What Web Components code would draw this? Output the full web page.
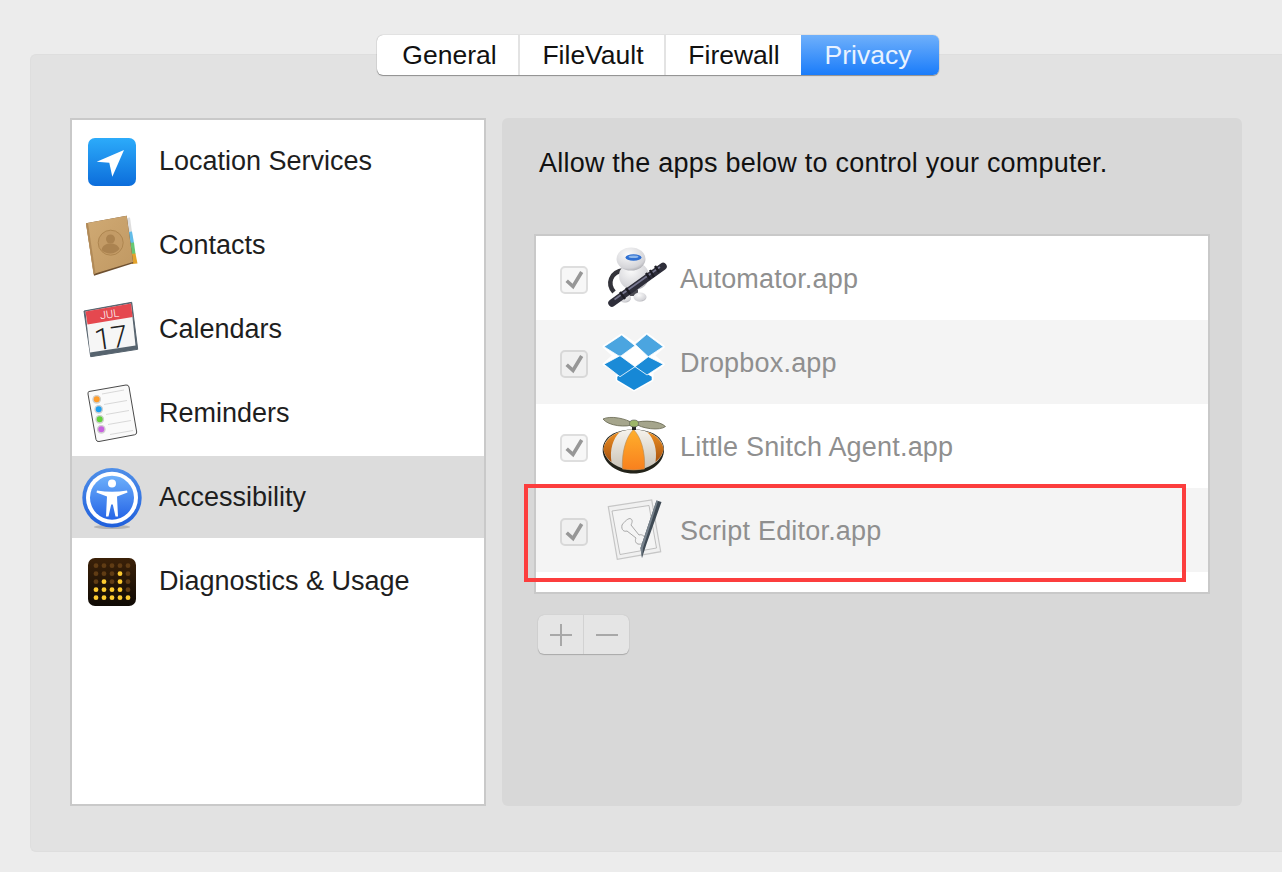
<!DOCTYPE html>
<html><head><meta charset="utf-8"><title>Privacy</title>
<style>
html,body{margin:0;height:872px;overflow:hidden;background:#ececec;font-family:"Liberation Sans",Arial,sans-serif}
</style></head><body>
<prefs-window>
  <seg-tabs slot="tabs"></seg-tabs>
  <service-list slot="left">
    <service-row label="Location Services" icon="location"></service-row>
    <service-row label="Contacts" icon="contacts"></service-row>
    <service-row label="Calendars" icon="calendar"></service-row>
    <service-row label="Reminders" icon="reminders"></service-row>
    <service-row label="Accessibility" icon="access" selected></service-row>
    <service-row label="Diagnostics &amp; Usage" icon="diag"></service-row>
  </service-list>
  <detail-pane slot="right">
    <app-row label="Automator.app" icon="automator"></app-row>
    <app-row label="Dropbox.app" icon="dropbox" alt></app-row>
    <app-row label="Little Snitch Agent.app" icon="snitch"></app-row>
    <app-row label="Script Editor.app" icon="script" alt></app-row>
  </detail-pane>
</prefs-window>
<script>
const ICONS={
location:`<defs><linearGradient id="g" x1="0" y1="0" x2="0" y2="1"><stop offset="0" stop-color="#2cabfa"/><stop offset="1" stop-color="#0c6ddb"/></linearGradient></defs>
<rect x="8" y="8" width="48" height="48" rx="7" fill="url(#g)"/><path d="M44 20 16.7 31.7 29.3 32.7 32.3 46.7Z" fill="#fff"/>`,
contacts:`<defs><linearGradient id="g" x1="0" y1="0" x2="1" y2="1"><stop offset="0" stop-color="#d0aa74"/><stop offset="1" stop-color="#c09862"/></linearGradient></defs>
<path d="M46 4 50 3.600 52 18 47 19Z" fill="#dedede"/><path d="M48 18 52 17.600 54 29 49 29Z" fill="#62bce8"/><path d="M49 29 54 28.600 55.500 40 50.500 40Z" fill="#66c774"/><path d="M50 40 55.500 39.600 57.500 49.500 52 50Z" fill="#e3a32c"/>
<path d="M6 9.300 46.700 1.700 53.300 49.300 14 61.700Z" fill="#6e5030"/><path d="M6 9.300 46.700 1.700 53 48 13.500 60Z" fill="url(#g)"/><path d="M6 9.300 8 9 15.500 59.500 13.800 60.500Z" fill="#b18a58"/>
<circle cx="30.700" cy="28.700" r="12.500" fill="#c39b66" stroke="#ae8650" stroke-width="1"/><circle cx="30.500" cy="25" r="4.500" fill="#ab8350"/><path d="M21.500 36c1-5 5-6.500 9-6.500s7.500 1.500 9 5.500c-2 2.600-5.500 4.500-9.300 4.500-3.400 0-6.600-1.400-8.700-3.500Z" fill="#ab8350"/>`,
calendar:`<path d="M4 13 51.700 4.300 57.700 51.300 10.700 58.700Z" fill="#56636e" stroke="#56636e" stroke-width="1" stroke-linejoin="round"/><path d="M5.500 13.500 51 5.500 55.500 47.500 10 54.500Z" fill="#f6f6f6"/><path d="M5.500 13.500 51 5.500 52.600 19 7.500 26.500Z" fill="#e5484f"/>
<text x="29.500" y="20" font-size="11" fill="#fff" text-anchor="middle" transform="rotate(-8 29 16)" font-family="Roboto" font-weight="300">JUL</text>
<text x="31" y="50.500" font-size="30" fill="#222" text-anchor="middle" transform="rotate(-8 30 40)" font-family="Roboto" font-weight="300">17</text>`,
reminders:`<path d="M9 9.500 46 3 Q48.500 2.700 49 5 L56.700 50 Q57 52.300 54.500 52.800 L19 59.500 Q16.500 59.800 16 57.500 L8 12 Q7.700 9.800 9 9.500Z" fill="#fafafa" stroke="#4a4a4a" stroke-width="1"/>
<path d="M22 12 44 8M24 22.500 47 18.500M26 32.500 49 28.500M28 42.500 51 38.500M30 52.500 53 48.500" stroke="#cfcfcf" stroke-width=".8"/>
<g stroke="#d0d0d0" stroke-width="1.400"><circle cx="16.700" cy="17.300" r="3.700" fill="#ff9c2a"/><circle cx="18.700" cy="27.300" r="3.700" fill="#1ea0f2"/><circle cx="19.700" cy="37.300" r="3.700" fill="#63d23a"/><circle cx="21.300" cy="47.300" r="3.700" fill="#c861e0"/></g>`,
access:`<defs><linearGradient id="g" x1="0" y1="0" x2="0" y2="1"><stop offset="0" stop-color="#6db0fb"/><stop offset="1" stop-color="#2564e6"/></linearGradient><linearGradient id="h" x1="0" y1="0" x2="0" y2="1"><stop offset="0" stop-color="#4f8fe8"/><stop offset="1" stop-color="#1f5fdc"/></linearGradient></defs>
<ellipse cx="32" cy="61" rx="18" ry="2" fill="#999" opacity=".6"/><circle cx="32" cy="31.700" r="29.700" fill="url(#h)"/><circle cx="32" cy="31.700" r="26" fill="#fff"/><circle cx="32" cy="31.700" r="22" fill="url(#g)"/>
<circle cx="32" cy="17.500" r="4" fill="#fff"/><path d="M17 24.500Q32 27 47 24.500L47.500 26.500 37 30.500 38 50.500 35.500 50.500 32.800 38.500H31.200L28.500 50.500 26 50.500 27 30.500 16.500 26.500Z" fill="#fff"/>`,
diag:`<defs><linearGradient id="g" x1="0" y1="0" x2="0" y2="1"><stop offset="0" stop-color="#3b2108"/><stop offset="1" stop-color="#0f0a05"/></linearGradient></defs><rect x="8" y="8" width="48" height="48" rx="7" fill="url(#g)"/>DOTS`,
automator:`<defs><radialGradient id="w" cx=".4" cy=".3" r=".85"><stop offset="0" stop-color="#fbfbfb"/><stop offset=".7" stop-color="#d4d4d8"/><stop offset="1" stop-color="#8e8e94"/></radialGradient></defs>
<path d="M24 24C10 26 7 38 14 46" fill="none" stroke="#33333a" stroke-width="4.500"/><rect x="26" y="38" width="12" height="12" fill="#4c4c54"/><ellipse cx="25" cy="52" rx="6" ry="4.500" fill="url(#w)"/><ellipse cx="40" cy="51" rx="6.500" ry="4.500" fill="url(#w)"/>
<ellipse cx="34" cy="30" rx="15" ry="14" fill="url(#w)"/><ellipse cx="31" cy="13" rx="14.500" ry="11.500" fill="url(#w)"/><ellipse cx="33.500" cy="11.500" rx="8" ry="3.200" fill="#2e6fd2"/><ellipse cx="33.500" cy="10.800" rx="5" ry="1.300" fill="#8fb8ea"/>
<path d="M12 57 63 20.500" stroke="#2e2e3a" stroke-width="7.500" stroke-linecap="round"/><path d="M14.500 53.500 60 21" stroke="#777790" stroke-width="1.600"/><path d="M20 46l5 7M26 42l4 6M50 24l4 7M46 27l4 6M55 20l4 6" stroke="#1c1c24" stroke-width="2.400"/>`,
dropbox:`<path d="M4 16.700 21.700 5 35 14 46.700 4.300 63.300 16.700 53 25.500 63.300 34.300 52 42V50L34 60 17.300 50V42L4 34.300 14 25.500Z" fill="#fff" stroke="#fff" stroke-width="3" stroke-linejoin="round"/>
<path d="M35 36.700 51.700 46.700V50L34 60 17.300 50V46.700Z" fill="#1688d6"/>
<g stroke="#fff" stroke-width=".8" stroke-linejoin="round"><path d="M4 16.700 21.700 5 35 15.700 20 26.700Z" fill="#4ba5e0"/><path d="M35 14.300 46.700 4.300 63.300 16.700 48.300 26.700Z" fill="#4ba5e0"/><path d="M4 34.300 20 25.700 35 36.700 20 46.700Z" fill="#1b8bd7"/><path d="M35 36.700 48.300 26.700 63.300 34.300 47 45Z" fill="#1b8bd7"/></g>`,
snitch:`<defs><linearGradient id="g" x1="0" y1="0" x2="0" y2="1"><stop offset="0" stop-color="#ffb02c"/><stop offset="1" stop-color="#f8801e"/></linearGradient><linearGradient id="b" x1="0" y1="0" x2="0" y2="1"><stop offset="0" stop-color="#f6f3ec"/><stop offset="1" stop-color="#c9c2b6"/></linearGradient><linearGradient id="o" x1="0" y1="0" x2="0" y2="1"><stop offset="0" stop-color="#ec8f22"/><stop offset="1" stop-color="#a9530f"/></linearGradient></defs>
<path d="M2.700 36C2.700 22 17 15.500 33.500 15.500S64 22 64 36C64 49 50 59.500 33.500 59.500S2.700 49 2.700 36Z" fill="#23231a"/>
<path d="M3.500 35C4.500 22 20 15.500 33.500 15.500S62.500 22 63.500 35C62.500 47 48 56 33.500 56S4.500 47 3.500 35Z" fill="url(#b)"/>
<path d="M3.500 35C4.500 27 11 21 20 18 13 24 9.500 36 11.500 48 7 44 4 40 3.500 35ZM63.500 35C62.500 27 56 21 47 18 54 24 57.500 36 55.500 48 60 44 63 40 63.500 35Z" fill="url(#o)"/>
<path d="M33.500 15.500C26 23 21.500 38 22.500 55Q33.500 57 44.500 55C45.500 38 41 23 33.500 15.500Z" fill="url(#g)" stroke="#b6884f" stroke-width=".6"/>
<rect x="32" y="11" width="4" height="5" fill="#222"/><path d="M3 5C10 1.500 26 4 34 10 27 14 8 12 3 5ZM34 9C44 5.500 60 7 65.500 12.500 60 17 42 15 34 9Z" fill="#a5a58c" stroke="#66664f" stroke-width=".8"/><ellipse cx="34" cy="9.500" rx="4.500" ry="3.500" fill="#9db668" stroke="#555" stroke-width=".6"/>`,
script:`<path d="M8.300 8.700 51.700 2 60.700 53.700 17.300 61.300Z" fill="#f0f0f0" stroke="#c6c6c6" stroke-width="1.200"/><path d="M12 13 49 7.500 56.500 50 20 56.500Z" fill="#f4f4f4" stroke="#a9a9a9" stroke-width=".7"/>
<path d="M22 27c2-3 7-8 9-6 2 1 1 4 0 6l8 10c3-1 6 1 6 4s-4 6-7 5c-3-1-3-4-2-6L27 33c-3 1-6-1-5-6Z" fill="none" stroke="#a8a8a8" stroke-width="1"/>
<path d="M56.500 2.500 61.500 4 46.500 46 42 60 40.500 50Z" fill="#3f4a54"/><path d="M56.500 2.500 58 3 43 50 42 60 40.500 50Z" fill="#78838d"/>`
};
let dots='';const lit={1:[3],2:[1,3],3:[0,1,2,3],4:[0,1,2,3,4]};
for(let r=0;r<5;r++)for(let c=0;c<5;c++){const on=(lit[r]||[]).includes(c);dots+=`<circle cx="${16+c*8}" cy="${15.7+r*8}" r="2.400" fill="${on?'#fdcb30':'#603c14'}"/>`}
ICONS.diag=ICONS.diag.replace('DOTS',dots);

function tpl(html){const t=document.createElement('template');t.innerHTML=html;return t}
function el(name,html){customElements.define(name,class extends HTMLElement{connectedCallback(){if(this.shadowRoot)return;const s=this.attachShadow({mode:'open'});const fill=html.replace(/\{\{(\w+)\}\}/g,(m,k)=>k==='svg'?`<svg width="64" height="64" viewBox="0 0 64 64">${ICONS[this.getAttribute('icon')]}</svg>`:(this.getAttribute(k)||'').replace(/&/g,'&amp;'));s.appendChild(tpl(fill).content.cloneNode(true))}})}

el('prefs-window',`<style>
:host{display:flex;flex-direction:column;box-sizing:border-box;width:1252px;height:798px;margin:54px 0 0 30px;background:#e2e2e2;border:1px solid #dedede;border-right:0;border-radius:6px 0 0 6px;padding:0 40px 0 39px}
.tabs{display:flex;margin:-20px 0 0 307px;height:40px;position:relative;z-index:1}
.main{display:flex;gap:16px;margin-top:43px;height:688px}
</style><div class="tabs"><slot name="tabs"></slot></div><div class="main"><slot name="left"></slot><slot name="right"></slot></div>`);

el('seg-tabs',`<style>
:host{display:flex;box-sizing:border-box;width:562px;height:40px;border-radius:6px;background:#fff;box-shadow:0 1px 1px rgba(0,0,0,.35),0 0 1px rgba(0,0,0,.4);overflow:hidden;font-size:26.5px;color:#111}
div{display:flex;align-items:center;justify-content:center;border-right:2px solid #e3e3e3;box-sizing:border-box}
.p{border:0;color:#e8f2ff;background:linear-gradient(#6fb0fb,#1a7cfa)}
</style><div style="width:143px;padding-left:4px">General</div><div style="width:146px;padding-left:2px">FileVault</div><div style="width:135px;border:0;padding-left:1px">Firewall</div><div class="p" style="width:138px;padding-right:4px">Privacy</div>`);

el('service-list',`<style>
:host{display:flex;flex-direction:column;gap:2px;box-sizing:border-box;width:416px;height:688px;background:#fff;border:2px solid #c9c9c9}
</style><slot></slot>`);

el('service-row',`<style>
:host{display:flex;align-items:center;height:82px;padding-left:8px;gap:15px;font-size:27px;color:#1e1e1e}
:host([selected]){background:#dcdcdc}
svg{display:block;margin-top:2px;overflow:visible;flex:none}
</style>{{svg}}<span>{{label}}</span>`);

el('detail-pane',`<style>
:host{display:flex;flex-direction:column;box-sizing:border-box;width:740px;height:688px;background:#d8d8d8;border-radius:6px;padding:0 32px;position:relative}
h2{margin:31px 0 0 5px;font:400 27px/28px "Liberation Sans",Arial,sans-serif;color:#111;letter-spacing:.22px;height:85px}
.list{box-sizing:border-box;height:360px;background:#fff;border:2px solid #c9c9c9;flex:none}
.btns{display:flex;width:91px;height:39px;margin:21px 0 0 4px;background:#e5e5e5;border-radius:6px;box-shadow:0 1px 1px rgba(0,0,0,.2),0 0 1px rgba(0,0,0,.18)}
.btns div{flex:1;display:flex;align-items:center;justify-content:center}
.btns div:first-child{border-right:1px solid #d2d2d2}
.mark{position:absolute;left:22px;top:366px;width:662px;height:98px;box-sizing:border-box;border:4px solid #fc3d3d}
</style><h2>Allow the apps below to control your computer.</h2>
<div class="list"><slot></slot></div>
<div class="btns"><div><svg width="24" height="24" viewBox="0 0 24 24"><path d="M1 12H23M12 1V23" stroke="#a8a8a8" stroke-width="2"/></svg></div><div><svg width="24" height="24" viewBox="0 0 24 24"><path d="M1 12H23" stroke="#a8a8a8" stroke-width="2"/></svg></div></div>
<div class="mark"></div>`);

el('app-row',`<style>
:host{display:flex;align-items:center;height:84px;padding-left:24px;font-size:27px;color:#8f8f8f;letter-spacing:.2px}
:host([alt]){background:#f4f4f4}
.c{box-sizing:border-box;width:28px;height:28px;border:2px solid #dedede;border-radius:5px;background:#f7f7f7;margin:4px 12px 0 0;flex:none}
:host([alt]) .c{background:#f0f0f0;border-color:#d8d8d8}
.c svg{display:block}
.ic{display:block;flex:none;margin-right:16px;width:64px;height:64px}
.ic svg{display:block;overflow:visible}
span{margin-top:3px}
</style><div class="c"><svg width="24" height="24" viewBox="0 0 24 24"><path d="M4.700 12.700 11 18.500 19.700 4" fill="none" stroke="#979797" stroke-width="3.600"/></svg></div><div class="ic">{{svg}}</div><span>{{label}}</span>`);
</script>
</body></html>
